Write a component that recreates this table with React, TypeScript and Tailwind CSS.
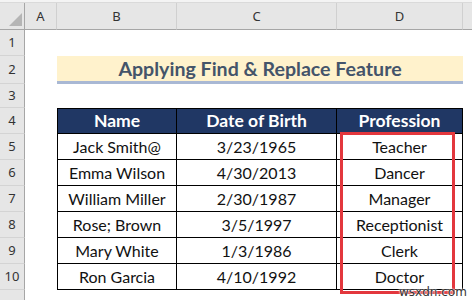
import React from "react";

const rows = [
  { name: "Jack Smith@", dob: "3/23/1965", job: "Teacher" },
  { name: "Emma Wilson", dob: "4/30/2013", job: "Dancer" },
  { name: "William Miller", dob: "2/30/1987", job: "Manager" },
  { name: "Rose; Brown", dob: "3/5/1997", job: "Receptionist" },
  { name: "Mary White", dob: "1/3/1986", job: "Clerk" },
  { name: "Ron Garcia", dob: "4/10/1992", job: "Doctor" },
];

function RowNum({ n }: { n: string }) {
  return (
    <div className="flex items-center justify-center bg-[#e6e6e6] border-r border-r-[#a6a6a6] border-b border-b-[#d4d4d4] text-[13px] leading-none text-[#333] font-['Noto_Sans',sans-serif]">
      {n}
    </div>
  );
}

function ColHead({ label }: { label: string }) {
  return (
    <div className="flex items-center justify-center bg-[#e6e6e6] border-r border-r-[#d0d0d0] border-b border-b-[#a6a6a6] text-[13px] leading-none text-[#333] font-['Noto_Sans',sans-serif]">
      {label}
    </div>
  );
}

export default function App() {
  return (
    <div className="relative w-[472px] h-[300px] overflow-hidden bg-white font-['Lato',sans-serif]">
      <div className="h-[3px] bg-[#f4f4f4] border-b border-b-[#dadada]" />
      <div className="grid grid-cols-[25px_32px_120px_160px_126px_9px] grid-rows-[27px_26px_28px_24px_26px_26px_26px_26px_26px_26px_26px_26px]">
        {/* column headers */}
        <div className="relative bg-[#e6e6e6] border-r border-r-[#a6a6a6] border-b border-b-[#a6a6a6]">
          <svg className="absolute left-0 top-0" width="25" height="27">
            <polygon points="22,10 22,23 9,23" fill="#b5b5b5" />
          </svg>
        </div>
        <ColHead label="A" />
        <ColHead label="B" />
        <ColHead label="C" />
        <ColHead label="D" />
        <div className="bg-[#e6e6e6] border-b border-b-[#a6a6a6]" />

        {/* row 1 */}
        <RowNum n="1" />
        <div className="col-span-5" />

        {/* row 2 - title */}
        <RowNum n="2" />
        <div />
        <div className="col-span-3 flex items-center justify-center bg-[#fff2cc] border-b-[3px] border-b-[#a9b8d4] text-[19.6px] leading-none font-bold text-[#44546a]">
          Applying Find &amp; Replace Feature
        </div>
        <div />

        {/* row 3 */}
        <RowNum n="3" />
        <div className="col-span-5" />

        {/* row 4 - table header */}
        <RowNum n="4" />
        <div />
        <div className="flex items-center justify-center bg-[#203764] border border-black text-white font-bold leading-none text-[17.5px]">
          Name
        </div>
        <div className="flex items-center justify-center bg-[#203764] border-y border-r border-black text-white font-bold leading-none text-[17.5px]">
          Date of Birth
        </div>
        <div className="flex items-center justify-center bg-[#203764] border-y border-r border-black text-white font-bold leading-none text-[17.5px]">
          Profession
        </div>
        <div />

        {rows.map((r, i) => (
          <React.Fragment key={r.name}>
            <RowNum n={String(i + 5)} />
            <div />
            <div className="flex items-center justify-center border-x border-b border-black text-[16px] leading-none text-[#111]">
              {r.name}
            </div>
            <div className="flex items-center justify-center border-r border-b border-black text-[16px] leading-none text-[#111]">
              {r.dob}
            </div>
            <div className="flex items-center justify-center border-r border-b border-black text-[16px] leading-none text-[#111]">
              {r.job}
            </div>
            <div />
          </React.Fragment>
        ))}

        {/* row 11, label falls below the visible area */}
        <RowNum n="" />
        <div className="col-span-5" />
      </div>

      {/* highlight box */}
      <div className="absolute left-[340px] top-[132px] w-[115px] h-[162px] border-[3px] border-[#e3373d]" />

      {/* watermark */}
      <div className="absolute left-[399px] top-[283px] text-[12px] text-[#333] font-['DejaVu_Sans',sans-serif] [text-shadow:0_0_2px_#fff,0_0_2px_#fff]">
        wsxdn.com
      </div>
    </div>
  );
}
